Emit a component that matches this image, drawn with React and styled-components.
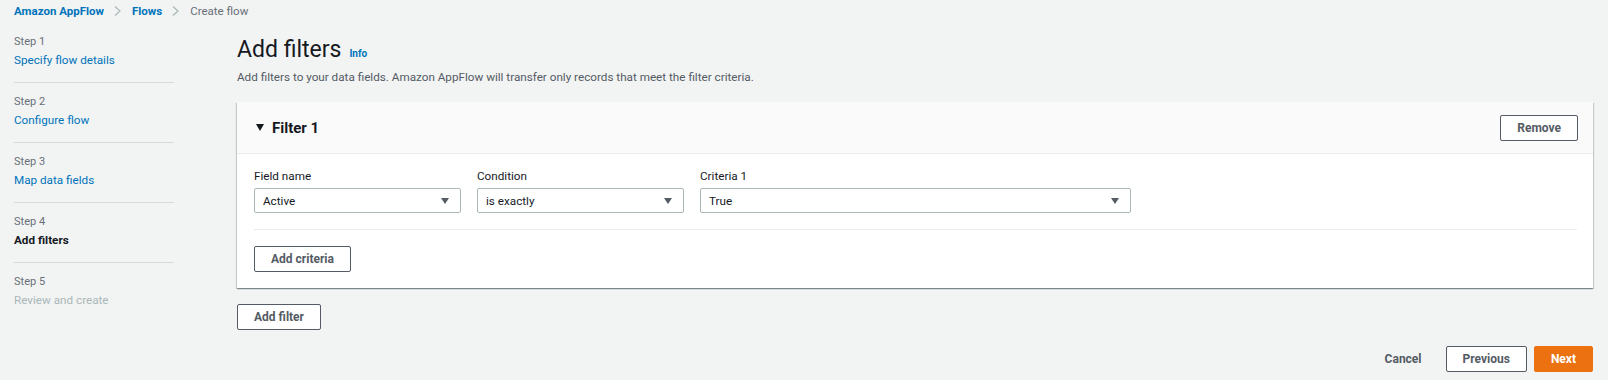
import styled, { createGlobalStyle } from 'styled-components'

const GlobalStyle = createGlobalStyle`
  body {
    margin: 0;
    background: #f2f3f3;
    font-family: Roboto, "Liberation Sans", sans-serif;
    color: #16191f;
  }
`

const Page = styled.div`
  width: 1608px;
  height: 380px;
  overflow: hidden;
`

const Crumbs = styled.nav`
  display: flex;
  align-items: center;
  height: 22px;
  padding-left: 14px;
  font-size: 11.5px;
`

const Crumb = styled.span`
  color: ${(p) => (p.current ? '#687078' : '#0073bb')};
  font-weight: ${(p) => (p.current ? 400 : 700)};
`

const Chevron = styled.svg`
  width: 7px;
  height: 10px;
  margin: 0 11px 0 10px;
`

const Layout = styled.div`
  display: grid;
  grid-template-columns: 160px 1fr;
  column-gap: 63px;
  padding: 12px 15px 0 14px;
`

const Steps = styled.ol`
  list-style: none;
  margin: 0;
  padding: 0;
`

const Step = styled.li`
  padding-bottom: 12px;
  margin-bottom: 11px;
  border-bottom: 1px solid #d5dbdb;
  &:last-child {
    border-bottom: none;
  }
`

const StepLabel = styled.div`
  font-size: 11px;
  line-height: 16px;
  color: #687078;
`

const StepTitle = styled.div`
  font-size: 11.7px;
  line-height: 20px;
  font-weight: ${(p) => (p.state === 'current' ? 700 : 400)};
  color: ${(p) =>
    p.state === 'current' ? '#16191f' : p.state === 'disabled' ? '#aab7b8' : '#0073bb'};
`

const Content = styled.main`
  display: flex;
  flex-direction: column;
`

const TitleRow = styled.div`
  display: flex;
  align-items: baseline;
  gap: 8px;
  height: 32px;
`

const Title = styled.h1`
  margin: 0;
  font-size: 23px;
  line-height: 32px;
  font-weight: 400;
`

const Info = styled.span`
  font-size: 10px;
  font-weight: 700;
  color: #0073bb;
`

const Description = styled.p`
  margin: 3px 0 0;
  font-size: 11.7px;
  line-height: 16px;
  color: #545b64;
`

const Card = styled.section`
  margin-top: 17px;
  background: #fff;
  box-shadow: 0 1px 1px 0 rgba(0, 28, 36, 0.3), 1px 1px 1px 0 rgba(0, 28, 36, 0.15),
    -1px 1px 1px 0 rgba(0, 28, 36, 0.15);
`

const CardHeader = styled.header`
  display: flex;
  align-items: center;
  justify-content: space-between;
  height: 51px;
  padding: 0 15px 0 19px;
  background: #fafafa;
  border-bottom: 1px solid #eaeded;
`

const CardTitle = styled.h2`
  display: flex;
  align-items: center;
  gap: 8px;
  margin: 0;
  font-size: 15px;
  font-weight: 700;
`

const CardBody = styled.div`
  padding: 14px 16px 16px 17px;
`

const Fields = styled.div`
  display: grid;
  grid-template-columns: 207px 207px 431px;
  column-gap: 16px;
  padding-bottom: 16px;
  border-bottom: 1px solid #eaeded;
`

const Field = styled.label`
  display: flex;
  flex-direction: column;
`

const FieldLabel = styled.span`
  font-size: 11.7px;
  line-height: 16px;
  margin-bottom: 4px;
`

const Select = styled.div`
  display: flex;
  align-items: center;
  justify-content: space-between;
  height: 25px;
  box-sizing: border-box;
  padding: 0 11px 0 8px;
  border: 1px solid #aab7b8;
  border-radius: 2px;
  font-size: 11.7px;
`

const Button = styled.button`
  height: 26px;
  box-sizing: border-box;
  padding: 0 16px;
  border: 1px solid ${(p) => (p.primary ? '#ec7211' : p.plain ? 'transparent' : '#545b64')};
  border-radius: 2px;
  background: ${(p) => (p.primary ? '#ec7211' : p.plain ? 'transparent' : '#fff')};
  color: ${(p) => (p.primary ? '#fff' : '#545b64')};
  font-family: inherit;
  font-size: 12px;
  font-weight: 700;
`

const CriteriaRow = styled.div`
  padding-top: 16px;
`

const AddFilterRow = styled.div`
  margin-top: 16px;
`

const Actions = styled.div`
  display: flex;
  justify-content: flex-end;
  gap: 7px;
  margin-top: 16px;
`

const Caret = () => (
  <svg width="8" height="6" viewBox="0 0 8 6">
    <path d="M0 0h8L4 6z" fill="#545b64" />
  </svg>
)

const Sep = () => (
  <Chevron viewBox="0 0 7 10">
    <path d="M1 .5l5 4.5-5 4.5" fill="none" stroke="#aab7b8" strokeWidth="1.2" />
  </Chevron>
)

const steps = [
  { n: 1, title: 'Specify flow details', state: 'link' },
  { n: 2, title: 'Configure flow', state: 'link' },
  { n: 3, title: 'Map data fields', state: 'link' },
  { n: 4, title: 'Add filters', state: 'current' },
  { n: 5, title: 'Review and create', state: 'disabled' },
]

const fields = [
  { label: 'Field name', value: 'Active' },
  { label: 'Condition', value: 'is exactly' },
  { label: 'Criteria 1', value: 'True' },
]

export default function App() {
  return (
    <Page>
      <GlobalStyle />
      <Crumbs>
        <Crumb>Amazon AppFlow</Crumb>
        <Sep />
        <Crumb>Flows</Crumb>
        <Sep />
        <Crumb current>Create flow</Crumb>
      </Crumbs>
      <Layout>
        <Steps>
          {steps.map((s) => (
            <Step key={s.n}>
              <StepLabel>Step {s.n}</StepLabel>
              <StepTitle state={s.state}>{s.title}</StepTitle>
            </Step>
          ))}
        </Steps>
        <Content>
          <TitleRow>
            <Title>Add filters</Title>
            <Info>Info</Info>
          </TitleRow>
          <Description>
            Add filters to your data fields. Amazon AppFlow will transfer only records that meet the
            filter criteria.
          </Description>
          <Card>
            <CardHeader>
              <CardTitle>
                <svg width="8" height="7" viewBox="0 0 8 7">
                  <path d="M0 0h8L4 7z" fill="#16191f" />
                </svg>
                Filter 1
              </CardTitle>
              <Button>Remove</Button>
            </CardHeader>
            <CardBody>
              <Fields>
                {fields.map((f) => (
                  <Field key={f.label}>
                    <FieldLabel>{f.label}</FieldLabel>
                    <Select>
                      {f.value}
                      <Caret />
                    </Select>
                  </Field>
                ))}
              </Fields>
              <CriteriaRow>
                <Button>Add criteria</Button>
              </CriteriaRow>
            </CardBody>
          </Card>
          <AddFilterRow>
            <Button>Add filter</Button>
          </AddFilterRow>
          <Actions>
            <Button plain>Cancel</Button>
            <Button>Previous</Button>
            <Button primary>Next</Button>
          </Actions>
        </Content>
      </Layout>
    </Page>
  )
}
